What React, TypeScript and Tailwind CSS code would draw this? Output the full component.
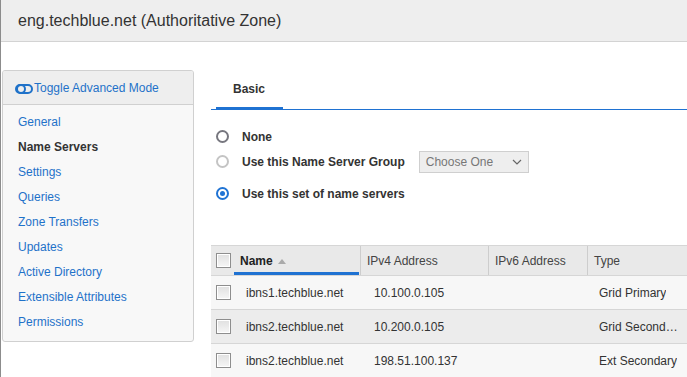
import React from "react";

const navItems = [
  "General",
  "Name Servers",
  "Settings",
  "Queries",
  "Zone Transfers",
  "Updates",
  "Active Directory",
  "Extensible Attributes",
  "Permissions",
];

const rows = [
  { name: "ibns1.techblue.net", ip: "10.100.0.105", type: "Grid Primary", bg: "bg-[#f7f7f7]" },
  { name: "ibns2.techblue.net", ip: "10.200.0.105", type: "Grid Secondary", bg: "bg-[#ececec]" },
  { name: "ibns2.techblue.net", ip: "198.51.100.137", type: "Ext Secondary", bg: "bg-[#f7f7f7]" },
];

function Checkbox() {
  return (
    <div className="w-[15px] h-[15px] border border-[#8e8e8e] bg-gradient-to-b from-[#e0e0e0] to-[#f6f6f6] shadow-[inset_0_0_0_1px_#ffffff]" />
  );
}

function Radio({ state }: { state: "dark" | "light" | "on" }) {
  if (state === "on") {
    return (
      <div className="w-[13px] h-[13px] rounded-full border-[2px] border-[#1f73d4] flex items-center justify-center">
        <div className="w-[5px] h-[5px] rounded-full bg-[#1f73d4]" />
      </div>
    );
  }
  return (
    <div
      className={
        "w-[13px] h-[13px] rounded-full border-[2px] " +
        (state === "dark" ? "border-[#77777f]" : "border-[#c4c4c4]")
      }
    />
  );
}

export default function App() {
  return (
    <div className="w-[687px] h-[377px] overflow-hidden bg-white border-l border-[#8c8c8c] flex flex-col font-['Liberation_Sans',Arial,sans-serif] text-[#333]">
      <div className="h-[42px] shrink-0 bg-[#eeeeee] border-b border-[#d3d3d3] pl-[17px] flex items-center text-[16px] text-[#333]">
        eng.techblue.net (Authoritative Zone)
      </div>
      <div className="flex flex-1 pt-[28px] min-h-0">
        <div className="w-[192px] shrink-0 self-start ml-[1px] border border-[#d0d0d0] rounded-[3px] bg-[#f8f8f8] overflow-hidden">
          <div className="h-[34px] bg-[#eeeeee] border-b border-[#d0d0d0] flex items-center pl-[12px] text-[12px] text-[#1f72c9]">
            <svg width="18" height="10" viewBox="0 0 18 10" className="mr-[1px] mt-[2px]">
              <rect x="1" y="1" width="16" height="8" rx="4" fill="none" stroke="#1f72c9" strokeWidth="2" />
              <circle cx="6" cy="5" r="4" fill="none" stroke="#1f72c9" strokeWidth="2" />
            </svg>
            Toggle Advanced Mode
          </div>
          <div className="pt-[5px] pb-[7px] flex flex-col">
            {navItems.map((n) => (
              <div
                key={n}
                className={
                  "h-[24.9px] flex items-center pl-[15px] text-[12px] " +
                  (n === "Name Servers" ? "font-bold text-[#333]" : "text-[#1f72c9]")
                }
              >
                {n}
              </div>
            ))}
          </div>
        </div>
        <div className="ml-[17px] flex-1 min-w-0 flex flex-col">
          <div className="h-[41px] border-b border-[#1f72d2] flex items-end">
            <div className="ml-[5px] w-[67px] h-[40px] border-b-[3px] border-[#1f72d2] flex items-center pl-[17px] text-[12px] font-bold text-[#333] -mb-px">
              Basic
            </div>
          </div>
          <div className="mt-[14px] flex flex-col text-[12px] font-bold text-[#333]">
            <div className="h-[25px] flex items-center pl-[5px]">
              <Radio state="dark" />
              <span className="ml-[13px]">None</span>
            </div>
            <div className="h-[25px] flex items-center pl-[5px]">
              <Radio state="light" />
              <span className="ml-[13px]">Use this Name Server Group</span>
              <div className="ml-[14px] w-[110px] h-[22px] bg-[#eeeeee] border border-[#cfcfcf] flex items-center pl-[6px] pr-[6px] font-normal text-[#777]">
                <span className="flex-1">Choose One</span>
                <svg width="10" height="6" viewBox="0 0 10 6">
                  <path d="M1 1 L5 5 L9 1" fill="none" stroke="#666" strokeWidth="1.2" />
                </svg>
              </div>
            </div>
            <div className="h-[25px] mt-[7px] flex items-center pl-[5px]">
              <Radio state="on" />
              <span className="ml-[13px]">Use this set of name servers</span>
            </div>
          </div>
          <div className="mt-[39px] border-t border-[#d6d6d6] w-[490px] text-[12px]">
            <div className="h-[30px] bg-[#e9e9e9] grid grid-cols-[23px_127px_128px_99px_113px] border-b border-[#d6d6d6]">
              <div className="flex items-center justify-center pl-[1px]">
                <Checkbox />
              </div>
              <div className="relative flex items-center pl-[6px] font-bold text-[#222] border-r border-[#cdcdcd]">
                Name
                <svg width="10" height="6" viewBox="0 0 10 6" className="ml-[4px]">
                  <path d="M1 6 L5 1 L9 6 Z" fill="#aaa" />
                </svg>
                <div className="absolute left-0 right-[1px] bottom-0 h-[3px] bg-[#1f72d2]" />
              </div>
              <div className="flex items-center pl-[6px] text-[#444] border-r border-[#cdcdcd]">IPv4 Address</div>
              <div className="flex items-center pl-[6px] text-[#444] border-r border-[#cdcdcd]">IPv6 Address</div>
              <div className="flex items-center pl-[6px] text-[#444]">Type</div>
            </div>
            {rows.map((r, i) => (
              <div
                key={i}
                className={"h-[34px] grid grid-cols-[23px_127px_128px_99px_113px] border-b border-[#d6d6d6] " + r.bg}
              >
                <div className="flex items-center justify-center pl-[1px]">
                  <Checkbox />
                </div>
                <div className="flex items-center pl-[12px] text-[#333]">{r.name}</div>
                <div className="flex items-center pl-[13px] text-[#333]">{r.ip}</div>
                <div />
                <div className="flex items-center pl-[11px] pr-[19px] text-[#333] min-w-0">
                  <span className="truncate">{r.type}</span>
                </div>
              </div>
            ))}
          </div>
        </div>
      </div>
    </div>
  );
}
